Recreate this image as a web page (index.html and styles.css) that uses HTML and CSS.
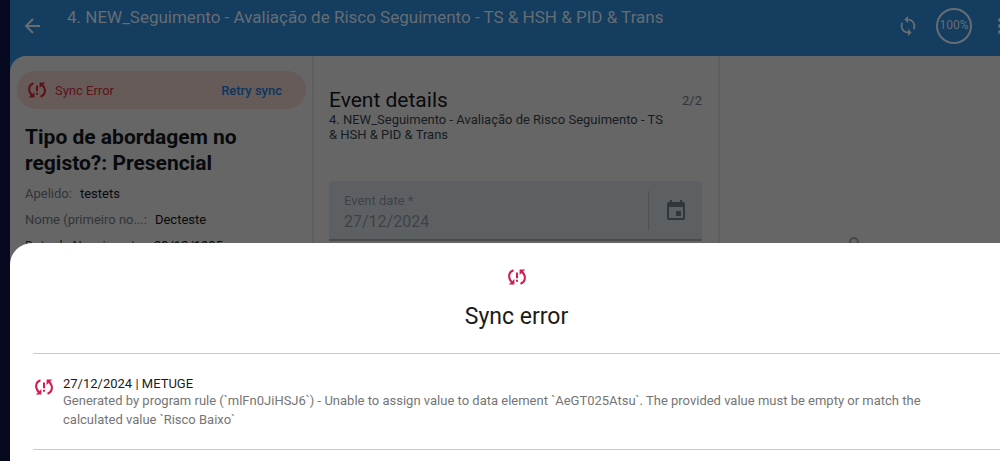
FILE: index.html
```
<!DOCTYPE html>
<html lang="pt">
<head>
<meta charset="utf-8">
<meta name="viewport" content="width=device-width, initial-scale=1">
<title>Sync error</title>
<link rel="stylesheet" href="styles.css">
</head>
<body>
<svg class="symbols" aria-hidden="true">
  <symbol id="sync-problem" viewBox="0 0 20 20">
    <g fill="none" stroke="currentColor" stroke-width="2">
      <path d="M6.500 3.200C1.500 4.800 .500 10.500 4.800 15.200"/>
      <path d="M13.500 16.800C18.500 15.200 19.500 9.500 15.200 4.800"/>
    </g>
    <path fill="currentColor" d="M1.800 17.600H7.400V12zM18.200 2.400H12.600V8zM9 5.400H11V11.200H9zM9 12.800H11V14.800H9z"/>
  </symbol>
</svg>
<div class="app">
  <header class="toolbar">
    <button class="icon-button" aria-label="Back">
      <svg width="18" height="18" viewBox="0 0 18 18" fill="none" stroke="currentColor" stroke-width="2"><path d="M16 9H3M9 2 2 9l7 7"/></svg>
    </button>
    <h1 class="toolbar-title">4. NEW_Seguimento - Avaliação de Risco Seguimento - TS &amp; HSH &amp; PID &amp; Trans</h1>
    <button class="icon-button" aria-label="Sync">
      <svg width="22" height="22" viewBox="0 0 24 24" fill="currentColor"><path d="M12 4V1L8 5l4 4V6c3.310 0 6 2.690 6 6 0 1.010-.250 1.970-.700 2.800l1.460 1.460C19.540 15.030 20 13.570 20 12c0-4.420-3.580-8-8-8zm0 14c-3.310 0-6-2.690-6-6 0-1.010.250-1.970.700-2.800L5.240 7.740C4.460 8.970 4 10.430 4 12c0 4.420 3.580 8 8 8v3l4-4-4-4v3z"/></svg>
    </button>
    <span class="progress">100%</span>
    <button class="icon-button more" aria-label="More options">
      <svg width="6" height="18" viewBox="0 0 6 18" fill="currentColor"><circle cx="3" cy="3" r="2"/><circle cx="3" cy="9" r="2"/><circle cx="3" cy="15" r="2"/></svg>
    </button>
  </header>
  <main class="panels">
    <section class="panel profile">
      <div class="sync-bar">
        <svg class="sync-icon" aria-hidden="true"><use href="#sync-problem"/></svg>
        <span>Sync Error</span>
        <button class="retry">Retry sync</button>
      </div>
      <div class="profile-info">
        <h2 class="profile-title">Tipo de abordagem no registo?: Presencial</h2>
        <dl class="attributes">
          <div class="attribute"><dt>Apelido:</dt><dd>testets</dd></div>
          <div class="attribute"><dt>Nome (primeiro no...:</dt><dd>Decteste</dd></div>
          <div class="attribute"><dt class="strong">Data de Nascimento:</dt><dd>28/12/1995</dd></div>
        </dl>
      </div>
    </section>
    <section class="panel details">
      <div class="details-head">
        <h2 class="details-title">Event details</h2>
        <span class="count">2/2</span>
      </div>
      <p class="details-sub">4. NEW_Seguimento - Avaliação de Risco Seguimento - TS &amp; HSH &amp; PID &amp; Trans</p>
      <div class="date-field">
        <div class="date-text">
          <label for="event-date">Event date *</label>
          <input id="event-date" type="text" value="27/12/2024" readonly>
        </div>
        <button class="calendar" aria-label="Choose date">
          <svg width="18" height="20" viewBox="0 0 18 20" fill="currentColor"><path fill-rule="evenodd" d="M3 0h2v2h8V0h2v2h1a2 2 0 0 1 2 2v14a2 2 0 0 1-2 2H2a2 2 0 0 1-2-2V4a2 2 0 0 1 2-2h1zM2 7v11h14V7zM9 11h5v5H9z"/></svg>
        </button>
      </div>
    </section>
    <section class="panel empty">
      <svg class="illustration" width="20" height="20" viewBox="0 0 20 20" fill="none" stroke="currentColor" stroke-width="2" aria-hidden="true"><circle cx="10" cy="5" r="4"/></svg>
    </section>
  </main>
  <section class="sheet" role="dialog" aria-labelledby="sheet-title">
    <header class="sheet-head">
      <svg class="sync-icon" aria-hidden="true"><use href="#sync-problem"/></svg>
      <h2 class="sheet-title" id="sheet-title">Sync error</h2>
    </header>
    <article class="error-item">
      <svg class="sync-icon" aria-hidden="true"><use href="#sync-problem"/></svg>
      <div>
        <h3 class="error-title">27/12/2024 | METUGE</h3>
        <p class="error-text">Generated by program rule (`mlFn0JiHSJ6`) - Unable to assign value to data element `AeGT025Atsu`. The provided value must be empty or match the calculated value `Risco Baixo`</p>
      </div>
    </article>
  </section>
</div>
</body>
</html>
```
FILE: styles.css
```
* { box-sizing: border-box; }
body {
  margin: 0;
  padding-left: 10px;
  background: #06081f;
  color: #080a0d;
  font: 13px/15px Roboto, sans-serif;
  overflow: hidden;
}
h1, h2, h3, p, dl, dd { margin: 0; font-weight: 400; }
button {
  padding: 0;
  border: 0;
  background: none;
  color: inherit;
  font: inherit;
}
svg { display: block; }
.symbols { position: absolute; width: 0; height: 0; }
.app {
  position: relative;
  display: flex;
  flex-direction: column;
  height: 100vh;
  background: #143d60;
  overflow: hidden;
}
.toolbar {
  display: flex;
  align-items: center;
  flex: none;
  height: 56px;
  padding: 0 0 5px 14px;
  color: #666d73;
}
.icon-button { flex: none; }
.toolbar-title {
  flex: 1;
  align-self: flex-start;
  margin: 7px 0 0 25px;
  font-size: 17px;
  line-height: 20px;
  white-space: nowrap;
}
.progress {
  display: grid;
  place-items: center;
  width: 36px;
  height: 36px;
  margin: 0 25px 0 17px;
  border: 2px solid;
  border-radius: 50%;
  font-size: 12px;
}
.more { margin-right: -3px; }
.panels {
  display: grid;
  grid-template-columns: 302fr 406fr 282fr;
  flex: 1;
  min-height: 0;
  background: #666;
  border-top-left-radius: 16px;
  overflow: hidden;
}
.panel + .panel { border-left: 2px solid #5f5f5f; }
.profile { padding: 15px 6px 0 7px; }
.sync-bar {
  display: flex;
  align-items: center;
  gap: 8px;
  height: 38px;
  padding: 0 24px 0 10px;
  border-radius: 19px;
  background: #665b59;
  color: #5c1216;
}
.sync-icon { flex: none; width: 20px; height: 20px; }
.retry { margin-left: auto; color: #0b3760; font-weight: 500; }
.profile-info { padding: 15px 8px; }
.profile-title { font-size: 21px; line-height: 26px; font-weight: 700; }
.attributes { padding-top: 5px; }
.attribute { display: flex; gap: 8px; line-height: 26px; }
.attribute dt { color: #30353a; }
.attribute .strong { color: #14181c; }
.details { padding: 32px 16px 0 15px; }
.details-head { display: flex; justify-content: space-between; align-items: center; }
.details-title { font-size: 21px; line-height: 24px; }
.count { color: #30353a; }
.details-sub { width: 92%; color: #171c22; }
.date-field {
  display: flex;
  align-items: center;
  height: 60px;
  margin-top: 39px;
  background: #5d6063;
  border-bottom: 2px solid #484a4c;
  border-radius: 4px 4px 0 0;
  color: #3e4246;
}
.date-text { flex: 1; min-width: 0; padding: 8px 0 0 15px; }
.date-text label { display: block; }
.date-text input {
  display: block;
  width: 100%;
  padding: 0;
  border: 0;
  outline: 0;
  background: none;
  color: inherit;
  font: 16px/28px Roboto, sans-serif;
}
.calendar {
  display: grid;
  place-items: center;
  width: 54px;
  height: 39px;
  border-left: 1px solid #4e5154;
  color: #30363c;
}
.empty { padding: 181px 0 0 124px; color: #484848; }
.sheet {
  position: absolute;
  inset: auto 0 0 0;
  height: 218px;
  padding-left: 23px;
  background: #fff;
  border-top-left-radius: 22px;
}
.sheet-head {
  display: flex;
  flex-direction: column;
  align-items: center;
  gap: 16px;
  padding: 24px 0 22px;
  border-bottom: 1px solid #c8c8c8;
  color: #d11d52;
}
.sheet-title { color: #1b1b1b; font-size: 23px; line-height: 28px; }
.error-item {
  display: flex;
  gap: 9px;
  padding: 23px 56px 20px 1px;
  border-bottom: 1px solid #c8c8c8;
  color: #d11d52;
}
.error-title { color: #1b1b1b; font-size: 13px; line-height: 14px; }
.error-text { color: #757575; line-height: 19px; }
```
